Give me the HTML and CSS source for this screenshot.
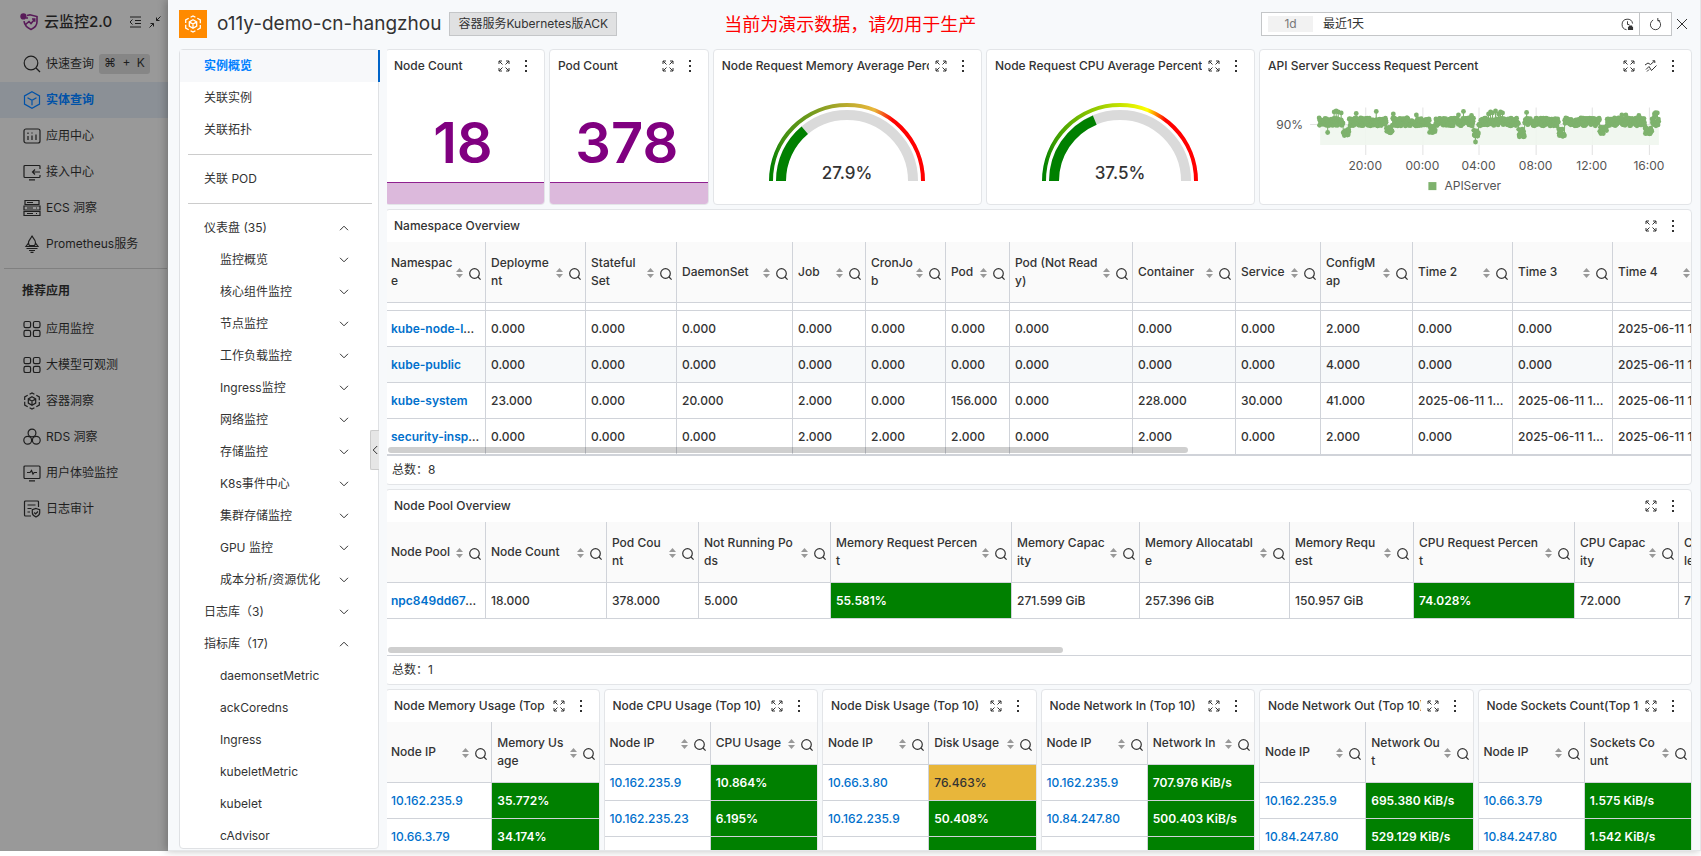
FILE: index.html
```html
<!DOCTYPE html>
<html lang="zh-CN">
<head>
  <meta charset="UTF-8" />
  <meta name="viewport" content="width=device-width, initial-scale=1" />
  <title>云监控2.0</title>
  <link rel="stylesheet" href="styles.css">
</head>
<body>

  <svg class="sprite" aria-hidden="true">
    <symbol id="i-expand" viewBox="0 0 12 12"><path d="M1 4V1h3M1 1l3.5 3.5M8 1h3v3M11 1L7.5 4.5M1 8v3h3M1 11l3.5-3.5M8 11h3V8M11 11L7.5 7.5"/></symbol>
    <symbol id="i-more" viewBox="0 0 12 12"><path class="fill" d="M5 0h2v2H5zM5 5h2v2H5zM5 10h2v2H5z"/></symbol>
    <symbol id="i-search" viewBox="0 0 12 12"><circle cx="5.5" cy="5.5" r="4.8"/><path d="M9 9l2.6 2.6"/></symbol>
    <symbol id="i-sort" viewBox="0 0 7 12"><path class="fill" d="M3.5 1L7 5H0zM3.5 11L0 7h7z"/></symbol>
    <symbol id="i-down" viewBox="0 0 10 6"><path d="M1 .8l4 4 4-4"/></symbol>
    <symbol id="i-up" viewBox="0 0 10 6"><path d="M1 5.2l4-4 4 4"/></symbol>
    <symbol id="i-grid" viewBox="0 0 18 18"><rect x="1" y="1.5" width="6.6" height="6.2" rx="1.6"/><rect x="10.4" y="1.5" width="6.6" height="6.2" rx="1.6"/><rect x="1" y="10.3" width="6.6" height="6.2" rx="1.6"/><rect x="10.4" y="10.3" width="6.6" height="6.2" rx="1.6"/></symbol>
    <symbol id="i-ack" viewBox="0 0 18 18"><path d="M6.6 2.2L9 .9l2.4 1.3M13.3 3.2l3 1.7v3.3M16.3 10v3.1l-3 1.7M11.4 15.8L9 17.1l-2.4-1.3M4.7 14.8l-3-1.7V9.8M1.7 8V4.9l3-1.7"/><path d="M9 4.8l3.7 2.1v4.2L9 13.2l-3.7-2.1V6.9zM5.3 6.9L9 9l3.7-2.1M9 9v4.2"/></symbol>
  </svg>

  <aside class="sidebar">
    <div class="brand">
      <svg class="brand-logo" viewBox="0 0 18 18"><path d="M7 2.6l3-.8 7 1.8v5.2c0 4-3 6.4-6 7.6-3.6-1.4-6.4-4-7-8.2"/><path d="M5.5 11.5L9 8.5l2 2 3.5-4M12 6h2.7v2.7"/><circle class="dot" cx="3.4" cy="3.4" r="3.1"/><circle class="dot" cx="7" cy="5" r="1"/></svg>
      <span class="brand-name">云监控2.0</span>
      <button class="fold" aria-label="收起菜单"><svg viewBox="0 0 12 12"><path d="M1 1h11M6 4.5h6M6 7.5h6M1 11h11M3.5 3.5L1 6l2.500 2.5"/></svg></button>
      <button class="fold" aria-label="收缩"><svg viewBox="0 0 12 12"><path d="M11.5.5l-4 4M7.5 1.5v3h3M.5 11.5l4-4M1.5 7.5h3v3"/></svg></button>
    </div>
    <nav>
      <a class="menu" href="#"><svg viewBox="0 0 18 18"><circle cx="8" cy="8" r="6.8"/><path d="M13 13l4 4"/></svg>快速查询<kbd>⌘ + K</kbd></a>
      <a class="menu active" href="#"><svg viewBox="0 0 18 18"><path d="M9 .8l7.500 4.1v8.200L9 17.2l-7.500-4.1V4.900zM4.500 6.700L9 9.200l4.500-2.500M9 9.200v5"/></svg>实体查询</a>
      <a class="menu" href="#"><svg viewBox="0 0 18 18"><rect x="1" y="2" width="16" height="14" rx="2"/><path d="M5 5.5V7M5 9v4M9 5.5v1M9 8.5V13M13 7.5V13"/></svg>应用中心</a>
      <a class="menu" href="#"><svg viewBox="0 0 18 18"><path d="M17 6V3.5a1 1 0 0 0-1-1H2a1 1 0 0 0-1 1v10a1 1 0 0 0 1 1h14a1 1 0 0 0 1-1V12M17 9H9.5M12 6.5L9.5 9l2.5 2.5M6 16.8h6"/></svg>接入中心</a>
      <a class="menu" href="#"><svg viewBox="0 0 18 18"><path d="M2 1.5h14v4H2zM1 7h16v4H1zM1 12.5h16v4H1zM4 3.5h6M4 9h6M4 14.5h6M13 9h1M13 14.5h1"/></svg>ECS 洞察</a>
      <a class="menu" href="#"><svg viewBox="0 0 18 18"><path d="M9 .5c.3 2.5 3.5 3.5 3.5 7 0 1.5-.5 2.5-1 3.2h-5C6 10 5.5 9 5.5 7.5 5.5 5 8.5 3.5 9 .5zM5.5 8l-2.5 3.500h12L12.5 8M3.5 13.5h11M6 15.5h6M7.5 17.3h3"/></svg>Prometheus服务</a>
    </nav>
    <hr>
    <h2>推荐应用</h2>
    <nav>
      <a class="menu" href="#"><svg><use href="#i-grid"/></svg>应用监控</a>
      <a class="menu" href="#"><svg><use href="#i-grid"/></svg>大模型可观测</a>
      <a class="menu" href="#"><svg><use href="#i-ack"/></svg>容器洞察</a>
      <a class="menu" href="#"><svg viewBox="0 0 18 18"><circle cx="9" cy="5" r="3.9"/><circle cx="4.7" cy="12.3" r="3.9"/><circle cx="13.3" cy="12.3" r="3.9"/></svg>RDS 洞察</a>
      <a class="menu" href="#"><svg viewBox="0 0 18 18"><rect x="1" y="2" width="16" height="12.5" rx="1"/><path d="M4 8.5h3l1.5-2 1.5 3.600 1.2-1.6H14M6 16.8h6"/></svg>用户体验监控</a>
      <a class="menu" href="#"><svg viewBox="0 0 18 18"><path d="M15.5 7V2a1 1 0 0 0-1-1h-12a1 1 0 0 0-1 1v13a1 1 0 0 0 1 1H8M4.5 5h8M4.5 8.5h4M4.5 12H7M13 8.5l3.7 1.3v3c0 2-1.7 3.3-3.7 4.2-2-.9-3.7-2.2-3.7-4.2v-3zM11.2 12.5l1.4 1.4 2.4-2.4"/></svg>日志审计</a>
    </nav>
  </aside>

  <main class="drawer">
    <header class="topbar">
      <span class="product"><svg><use href="#i-ack"/></svg></span>
      <h1>o11y-demo-cn-hangzhou</h1>
      <span class="tag">容器服务Kubernetes版ACK</span>
      <p class="notice">当前为演示数据，请勿用于生产</p>
      <div class="picker">
        <span class="range">1d</span>
        <input type="text" value="最近1天" aria-label="时间范围" readonly>
        <button aria-label="历史时间"><svg viewBox="0 0 14 14"><path d="M12.5 6A5.7 5.7 0 1 0 6 12.6M7 3.5V7h2"/><path class="fill" d="M7.5 9.5H13V13H7.500zM8.5 8H12v2H8.500z"/></svg></button>
        <button class="refresh" aria-label="刷新"><svg viewBox="0 0 14 14"><path d="M4.500 2.200A5.500 5.500 0 1 0 9.500 2.200M9.500 0v3H12"/></svg></button>
      </div>
      <button class="close" aria-label="关闭"><svg viewBox="0 0 12 12"><path d="M1 1l10 10M11 1L1 11"/></svg></button>
    </header>

    <div class="content">
      <aside class="side">
        <nav>
          <a class="item active" href="#">实例概览</a>
          <a class="item" href="#">关联实例</a>
          <a class="item" href="#">关联拓扑</a>
          <hr>
          <a class="item" href="#">关联 POD</a>
          <hr>
          <a class="item" href="#">仪表盘 (35)<svg><use href="#i-up"/></svg></a>
          <a class="item sub" href="#">监控概览<svg><use href="#i-down"/></svg></a>
          <a class="item sub" href="#">核心组件监控<svg><use href="#i-down"/></svg></a>
          <a class="item sub" href="#">节点监控<svg><use href="#i-down"/></svg></a>
          <a class="item sub" href="#">工作负载监控<svg><use href="#i-down"/></svg></a>
          <a class="item sub" href="#">Ingress监控<svg><use href="#i-down"/></svg></a>
          <a class="item sub" href="#">网络监控<svg><use href="#i-down"/></svg></a>
          <a class="item sub" href="#">存储监控<svg><use href="#i-down"/></svg></a>
          <a class="item sub" href="#">K8s事件中心<svg><use href="#i-down"/></svg></a>
          <a class="item sub" href="#">集群存储监控<svg><use href="#i-down"/></svg></a>
          <a class="item sub" href="#">GPU 监控<svg><use href="#i-down"/></svg></a>
          <a class="item sub" href="#">成本分析/资源优化<svg><use href="#i-down"/></svg></a>
          <a class="item" href="#">日志库（3)<svg><use href="#i-down"/></svg></a>
          <a class="item" href="#">指标库（17)<svg><use href="#i-up"/></svg></a>
          <a class="item sub" href="#">daemonsetMetric</a>
          <a class="item sub" href="#">ackCoredns</a>
          <a class="item sub" href="#">Ingress</a>
          <a class="item sub" href="#">kubeletMetric</a>
          <a class="item sub" href="#">kubelet</a>
          <a class="item sub" href="#">cAdvisor</a>
        </nav>
        <button class="handle" aria-label="收起"><svg viewBox="0 0 6 10"><path d="M5.2 1l-4 4 4 4"/></svg></button>
      </aside>

      <div class="board">
        <div class="grid">

          <section class="card w3 h4">
            <div class="card-head"><h3>Node Count</h3><button aria-label="全屏"><svg><use href="#i-expand"/></svg></button><button aria-label="更多"><svg><use href="#i-more"/></svg></button></div>
            <div class="stat">18</div>
            <div class="spark"></div>
          </section>

          <section class="card w3 h4">
            <div class="card-head"><h3>Pod Count</h3><button aria-label="全屏"><svg><use href="#i-expand"/></svg></button><button aria-label="更多"><svg><use href="#i-more"/></svg></button></div>
            <div class="stat">378</div>
            <div class="spark"></div>
          </section>

          <section class="card w5 h4">
            <div class="card-head"><h3>Node Request Memory Average Percent</h3><button aria-label="全屏"><svg><use href="#i-expand"/></svg></button><button aria-label="更多"><svg><use href="#i-more"/></svg></button></div>
            <svg class="gauge" viewBox="0 0 160 80">
              <defs>
                <linearGradient id="memScale">
                  <stop offset="0" stop-color="#008000"/><stop offset=".07" stop-color="#3f8f10"/><stop offset=".25" stop-color="#6f9a1c"/><stop offset=".5" stop-color="#baab2e"/><stop offset=".68" stop-color="#e8b63a"/><stop offset=".8" stop-color="#ff0000"/>
                </linearGradient>
              </defs>
              <path class="scale" stroke="url(#memScale)" d="M4 79a76 76 0 0 1 152 0"/>
              <path class="track" d="M14 79a66 66 0 0 1 132 0"/>
              <path class="value" pathLength="100" stroke-dasharray="27.9 100" d="M14 79a66 66 0 0 1 132 0"/>
              <text x="80" y="77">27.9%</text>
            </svg>
          </section>

          <section class="card w5 h4">
            <div class="card-head"><h3>Node Request CPU Average Percent</h3><button aria-label="全屏"><svg><use href="#i-expand"/></svg></button><button aria-label="更多"><svg><use href="#i-more"/></svg></button></div>
            <svg class="gauge" viewBox="0 0 160 80">
              <defs>
                <linearGradient id="cpuScale">
                  <stop offset="0" stop-color="#008000"/><stop offset=".07" stop-color="#3a9d00"/><stop offset=".25" stop-color="#7abc00"/><stop offset=".5" stop-color="#c4e200"/><stop offset=".68" stop-color="#ffff00"/><stop offset=".8" stop-color="#ff0000"/>
                </linearGradient>
              </defs>
              <path class="scale" stroke="url(#cpuScale)" d="M4 79a76 76 0 0 1 152 0"/>
              <path class="track" d="M14 79a66 66 0 0 1 132 0"/>
              <path class="value" pathLength="100" stroke-dasharray="37.5 100" d="M14 79a66 66 0 0 1 132 0"/>
              <text x="80" y="77">37.5%</text>
            </svg>
          </section>

          <section class="card w8 h4">
            <div class="card-head"><h3>API Server Success Request Percent</h3><button aria-label="全屏"><svg><use href="#i-expand"/></svg></button><button aria-label="对比"><svg viewBox="0 0 12 12"><path d="M0 5l3-2 2.5 1.5L9.5 1M7.5.8h2.3V3M1 9.5l3-3 2.5 4 5-5M2 11.5l2-2"/></svg></button><button aria-label="更多"><svg><use href="#i-more"/></svg></button></div>
            <svg class="chart" viewBox="0 0 430 120">
              <g id="apiGrid" class="lines"></g>
              <rect class="area" x="60" y="42" width="338" height="20"/>
              <g id="apiSeries"></g>
              <text class="y" x="43" y="46">90%</text>
              <g id="apiLabels"></g>
              <rect class="key" x="168" y="99" width="8" height="8"/>
              <text class="name" x="184" y="107">APIServer</text>
            </svg>
          </section>

          <section class="card w24 h7">
            <div class="card-head"><h3>Namespace Overview</h3><button aria-label="全屏"><svg><use href="#i-expand"/></svg></button><button aria-label="更多"><svg><use href="#i-more"/></svg></button></div>
            <div class="table-wrap">
              <table class="wide namespaces">
                <colgroup><col class="c100"><col class="c100"><col class="c91"><col class="c116"><col class="c73"><col class="c80"><col class="c64"><col class="c123"><col class="c103"><col class="c85"><col class="c92"><col class="c100"><col class="c100"><col class="c100"></colgroup>
                <thead>
                  <tr>
                    <th><div class="th"><span>Namespace</span><button class="sort" aria-label="排序"><svg><use href="#i-sort"/></svg></button><button aria-label="搜索"><svg><use href="#i-search"/></svg></button></div></th>
                    <th><div class="th"><span>Deployment</span><button class="sort" aria-label="排序"><svg><use href="#i-sort"/></svg></button><button aria-label="搜索"><svg><use href="#i-search"/></svg></button></div></th>
                    <th><div class="th"><span>Stateful<br>Set</span><button class="sort" aria-label="排序"><svg><use href="#i-sort"/></svg></button><button aria-label="搜索"><svg><use href="#i-search"/></svg></button></div></th>
                    <th><div class="th"><span>DaemonSet</span><button class="sort" aria-label="排序"><svg><use href="#i-sort"/></svg></button><button aria-label="搜索"><svg><use href="#i-search"/></svg></button></div></th>
                    <th><div class="th"><span>Job</span><button class="sort" aria-label="排序"><svg><use href="#i-sort"/></svg></button><button aria-label="搜索"><svg><use href="#i-search"/></svg></button></div></th>
                    <th><div class="th"><span>CronJob</span><button class="sort" aria-label="排序"><svg><use href="#i-sort"/></svg></button><button aria-label="搜索"><svg><use href="#i-search"/></svg></button></div></th>
                    <th><div class="th"><span>Pod</span><button class="sort" aria-label="排序"><svg><use href="#i-sort"/></svg></button><button aria-label="搜索"><svg><use href="#i-search"/></svg></button></div></th>
                    <th><div class="th"><span>Pod (Not Ready)</span><button class="sort" aria-label="排序"><svg><use href="#i-sort"/></svg></button><button aria-label="搜索"><svg><use href="#i-search"/></svg></button></div></th>
                    <th><div class="th"><span>Container</span><button class="sort" aria-label="排序"><svg><use href="#i-sort"/></svg></button><button aria-label="搜索"><svg><use href="#i-search"/></svg></button></div></th>
                    <th><div class="th"><span>Service</span><button class="sort" aria-label="排序"><svg><use href="#i-sort"/></svg></button><button aria-label="搜索"><svg><use href="#i-search"/></svg></button></div></th>
                    <th><div class="th"><span>ConfigMap</span><button class="sort" aria-label="排序"><svg><use href="#i-sort"/></svg></button><button aria-label="搜索"><svg><use href="#i-search"/></svg></button></div></th>
                    <th><div class="th"><span>Time 2</span><button class="sort" aria-label="排序"><svg><use href="#i-sort"/></svg></button><button aria-label="搜索"><svg><use href="#i-search"/></svg></button></div></th>
                    <th><div class="th"><span>Time 3</span><button class="sort" aria-label="排序"><svg><use href="#i-sort"/></svg></button><button aria-label="搜索"><svg><use href="#i-search"/></svg></button></div></th>
                    <th><div class="th"><span>Time 4</span><button class="sort" aria-label="排序"><svg><use href="#i-sort"/></svg></button><button aria-label="搜索"><svg><use href="#i-search"/></svg></button></div></th>
                  </tr>
                </thead>
                <tbody>
                  <tr class="peek"><td></td><td></td><td></td><td></td><td></td><td></td><td></td><td></td><td></td><td></td><td></td><td></td><td></td><td></td></tr>
                  <tr><td><a href="#">kube-node-lease</a></td><td>0.000</td><td>0.000</td><td>0.000</td><td>0.000</td><td>0.000</td><td>0.000</td><td>0.000</td><td>0.000</td><td>0.000</td><td>2.000</td><td>0.000</td><td>0.000</td><td class="cut">2025-06-11 17:00</td></tr>
                  <tr class="even"><td><a href="#">kube-public</a></td><td>0.000</td><td>0.000</td><td>0.000</td><td>0.000</td><td>0.000</td><td>0.000</td><td>0.000</td><td>0.000</td><td>0.000</td><td>4.000</td><td>0.000</td><td>0.000</td><td class="cut">2025-06-11 17:00</td></tr>
                  <tr><td><a href="#">kube-system</a></td><td>23.000</td><td>0.000</td><td>20.000</td><td>2.000</td><td>0.000</td><td>156.000</td><td>0.000</td><td>228.000</td><td>30.000</td><td>41.000</td><td>2025-06-11 17:00</td><td>2025-06-11 17:00</td><td class="cut">2025-06-11 17:00</td></tr>
                  <tr><td><a href="#">security-inspector</a></td><td>0.000</td><td>0.000</td><td>0.000</td><td>2.000</td><td>2.000</td><td>2.000</td><td>0.000</td><td>2.000</td><td>0.000</td><td>2.000</td><td>0.000</td><td>2025-06-11 17:00</td><td class="cut">2025-06-11 17:00</td></tr>
                </tbody>
              </table>
              <div class="scroll" style="width: 61.3%"></div>
            </div>
            <div class="total">总数：8</div>
          </section>

          <section class="card w24 h5">
            <div class="card-head"><h3>Node Pool Overview</h3><button aria-label="全屏"><svg><use href="#i-expand"/></svg></button><button aria-label="更多"><svg><use href="#i-more"/></svg></button></div>
            <div class="table-wrap">
              <table class="wide pools">
                <colgroup><col class="c100"><col class="c121"><col class="c92"><col class="c132"><col class="c181"><col class="c128"><col class="c150"><col class="c124"><col class="c161"><col class="c104"><col class="c123"></colgroup>
                <thead>
                  <tr>
                    <th><div class="th"><span>Node Pool</span><button class="sort" aria-label="排序"><svg><use href="#i-sort"/></svg></button><button aria-label="搜索"><svg><use href="#i-search"/></svg></button></div></th>
                    <th><div class="th"><span>Node Count</span><button class="sort" aria-label="排序"><svg><use href="#i-sort"/></svg></button><button aria-label="搜索"><svg><use href="#i-search"/></svg></button></div></th>
                    <th><div class="th"><span>Pod Count</span><button class="sort" aria-label="排序"><svg><use href="#i-sort"/></svg></button><button aria-label="搜索"><svg><use href="#i-search"/></svg></button></div></th>
                    <th><div class="th"><span>Not Running Pods</span><button class="sort" aria-label="排序"><svg><use href="#i-sort"/></svg></button><button aria-label="搜索"><svg><use href="#i-search"/></svg></button></div></th>
                    <th><div class="th"><span>Memory Request Percent</span><button class="sort" aria-label="排序"><svg><use href="#i-sort"/></svg></button><button aria-label="搜索"><svg><use href="#i-search"/></svg></button></div></th>
                    <th><div class="th"><span>Memory Capacity</span><button class="sort" aria-label="排序"><svg><use href="#i-sort"/></svg></button><button aria-label="搜索"><svg><use href="#i-search"/></svg></button></div></th>
                    <th><div class="th"><span>Memory Allocatable</span><button class="sort" aria-label="排序"><svg><use href="#i-sort"/></svg></button><button aria-label="搜索"><svg><use href="#i-search"/></svg></button></div></th>
                    <th><div class="th"><span>Memory Request</span><button class="sort" aria-label="排序"><svg><use href="#i-sort"/></svg></button><button aria-label="搜索"><svg><use href="#i-search"/></svg></button></div></th>
                    <th><div class="th"><span>CPU Request Percent</span><button class="sort" aria-label="排序"><svg><use href="#i-sort"/></svg></button><button aria-label="搜索"><svg><use href="#i-search"/></svg></button></div></th>
                    <th><div class="th"><span>CPU Capacity</span><button class="sort" aria-label="排序"><svg><use href="#i-sort"/></svg></button><button aria-label="搜索"><svg><use href="#i-search"/></svg></button></div></th>
                    <th><div class="th"><span>CPU Allocatab<br>le</span><button class="sort" aria-label="排序"><svg><use href="#i-sort"/></svg></button><button aria-label="搜索"><svg><use href="#i-search"/></svg></button></div></th>
                  </tr>
                </thead>
                <tbody>
                  <tr><td><a href="#">npc849dd67c2f14</a></td><td>18.000</td><td>378.000</td><td>5.000</td><td class="good">55.581%</td><td>271.599 GiB</td><td>257.396 GiB</td><td>150.957 GiB</td><td class="good">74.028%</td><td>72.000</td><td>70.000</td></tr>
                </tbody>
              </table>
              <div class="scroll" style="width: 51.7%"></div>
            </div>
            <div class="total">总数：1</div>
          </section>

          <section class="card w4 h7">
            <div class="card-head"><h3>Node Memory Usage (Top 10)</h3><button aria-label="全屏"><svg><use href="#i-expand"/></svg></button><button aria-label="更多"><svg><use href="#i-more"/></svg></button></div>
            <div class="table-wrap">
              <table>
                <thead>
                  <tr>
                    <th><div class="th"><span>Node IP</span><button class="sort" aria-label="排序"><svg><use href="#i-sort"/></svg></button><button aria-label="搜索"><svg><use href="#i-search"/></svg></button></div></th>
                    <th><div class="th"><span>Memory Usage</span><button class="sort" aria-label="排序"><svg><use href="#i-sort"/></svg></button><button aria-label="搜索"><svg><use href="#i-search"/></svg></button></div></th>
                  </tr>
                </thead>
                <tbody>
                  <tr><td><a href="#">10.162.235.9</a></td><td class="good">35.772%</td></tr>
                  <tr><td><a href="#">10.66.3.79</a></td><td class="good">34.174%</td></tr>
                </tbody>
              </table>
            </div>
          </section>

          <section class="card w4 h7">
            <div class="card-head"><h3>Node CPU Usage (Top 10)</h3><button aria-label="全屏"><svg><use href="#i-expand"/></svg></button><button aria-label="更多"><svg><use href="#i-more"/></svg></button></div>
            <div class="table-wrap">
              <table>
                <thead>
                  <tr>
                    <th><div class="th"><span>Node IP</span><button class="sort" aria-label="排序"><svg><use href="#i-sort"/></svg></button><button aria-label="搜索"><svg><use href="#i-search"/></svg></button></div></th>
                    <th><div class="th"><span>CPU Usage</span><button class="sort" aria-label="排序"><svg><use href="#i-sort"/></svg></button><button aria-label="搜索"><svg><use href="#i-search"/></svg></button></div></th>
                  </tr>
                </thead>
                <tbody>
                  <tr><td><a href="#">10.162.235.9</a></td><td class="good">10.864%</td></tr>
                  <tr><td><a href="#">10.162.235.23</a></td><td class="good">6.195%</td></tr>
                  <tr><td></td><td class="good"></td></tr>
                </tbody>
              </table>
            </div>
          </section>

          <section class="card w4 h7">
            <div class="card-head"><h3>Node Disk Usage (Top 10)</h3><button aria-label="全屏"><svg><use href="#i-expand"/></svg></button><button aria-label="更多"><svg><use href="#i-more"/></svg></button></div>
            <div class="table-wrap">
              <table>
                <thead>
                  <tr>
                    <th><div class="th"><span>Node IP</span><button class="sort" aria-label="排序"><svg><use href="#i-sort"/></svg></button><button aria-label="搜索"><svg><use href="#i-search"/></svg></button></div></th>
                    <th><div class="th"><span>Disk Usage</span><button class="sort" aria-label="排序"><svg><use href="#i-sort"/></svg></button><button aria-label="搜索"><svg><use href="#i-search"/></svg></button></div></th>
                  </tr>
                </thead>
                <tbody>
                  <tr><td><a href="#">10.66.3.80</a></td><td class="warn">76.463%</td></tr>
                  <tr><td><a href="#">10.162.235.9</a></td><td class="good">50.408%</td></tr>
                  <tr><td></td><td class="good"></td></tr>
                </tbody>
              </table>
            </div>
          </section>

          <section class="card w4 h7">
            <div class="card-head"><h3>Node Network In (Top 10)</h3><button aria-label="全屏"><svg><use href="#i-expand"/></svg></button><button aria-label="更多"><svg><use href="#i-more"/></svg></button></div>
            <div class="table-wrap">
              <table>
                <thead>
                  <tr>
                    <th><div class="th"><span>Node IP</span><button class="sort" aria-label="排序"><svg><use href="#i-sort"/></svg></button><button aria-label="搜索"><svg><use href="#i-search"/></svg></button></div></th>
                    <th><div class="th"><span>Network In</span><button class="sort" aria-label="排序"><svg><use href="#i-sort"/></svg></button><button aria-label="搜索"><svg><use href="#i-search"/></svg></button></div></th>
                  </tr>
                </thead>
                <tbody>
                  <tr><td><a href="#">10.162.235.9</a></td><td class="good">707.976 KiB/s</td></tr>
                  <tr><td><a href="#">10.84.247.80</a></td><td class="good">500.403 KiB/s</td></tr>
                  <tr><td></td><td class="good"></td></tr>
                </tbody>
              </table>
            </div>
          </section>

          <section class="card w4 h7">
            <div class="card-head"><h3>Node Network Out (Top 10)</h3><button aria-label="全屏"><svg><use href="#i-expand"/></svg></button><button aria-label="更多"><svg><use href="#i-more"/></svg></button></div>
            <div class="table-wrap">
              <table>
                <thead>
                  <tr>
                    <th><div class="th"><span>Node IP</span><button class="sort" aria-label="排序"><svg><use href="#i-sort"/></svg></button><button aria-label="搜索"><svg><use href="#i-search"/></svg></button></div></th>
                    <th><div class="th"><span>Network Out</span><button class="sort" aria-label="排序"><svg><use href="#i-sort"/></svg></button><button aria-label="搜索"><svg><use href="#i-search"/></svg></button></div></th>
                  </tr>
                </thead>
                <tbody>
                  <tr><td><a href="#">10.162.235.9</a></td><td class="good">695.380 KiB/s</td></tr>
                  <tr><td><a href="#">10.84.247.80</a></td><td class="good">529.129 KiB/s</td></tr>
                </tbody>
              </table>
            </div>
          </section>

          <section class="card w4 h7">
            <div class="card-head"><h3>Node Sockets Count(Top 10)</h3><button aria-label="全屏"><svg><use href="#i-expand"/></svg></button><button aria-label="更多"><svg><use href="#i-more"/></svg></button></div>
            <div class="table-wrap">
              <table>
                <thead>
                  <tr>
                    <th><div class="th"><span>Node IP</span><button class="sort" aria-label="排序"><svg><use href="#i-sort"/></svg></button><button aria-label="搜索"><svg><use href="#i-search"/></svg></button></div></th>
                    <th><div class="th"><span>Sockets Count</span><button class="sort" aria-label="排序"><svg><use href="#i-sort"/></svg></button><button aria-label="搜索"><svg><use href="#i-search"/></svg></button></div></th>
                  </tr>
                </thead>
                <tbody>
                  <tr><td><a href="#">10.66.3.79</a></td><td class="good">1.575 KiB/s</td></tr>
                  <tr><td><a href="#">10.84.247.80</a></td><td class="good">1.542 KiB/s</td></tr>
                </tbody>
              </table>
            </div>
          </section>

        </div>
      </div>
    </div>
  </main>

  <script src="chart.js"></script>
</body>
</html>
```
FILE: styles.css
```css
* {
  box-sizing: border-box;
}

body {
  margin: 0;
  height: 100vh;
  padding-bottom: 5px;
  display: flex;
  overflow: hidden;
  background: #fff;
  color: #333;
  font-family: Inter, "Noto Sans CJK SC", sans-serif;
  font-size: 12px;
  line-height: 18px;
}

a {
  color: inherit;
  text-decoration: none;
}

button {
  flex: none;
  display: flex;
  align-items: center;
  justify-content: center;
  padding: 0;
  border: none;
  background: none;
  color: inherit;
  cursor: pointer;
}

svg {
  fill: none;
  stroke: currentColor;
}

.fill {
  fill: currentColor;
  stroke: none;
}

.sprite {
  position: absolute;
  width: 0;
  height: 0;
}

hr {
  margin: 0;
  border: none;
  border-top: 1px solid #ccc;
}

/* left menu, dimmed behind the drawer */
.sidebar {
  flex: none;
  width: 168px;
  background: #999;
  color: #1e1e1e;
}

.brand {
  display: flex;
  align-items: center;
  height: 46px;
  padding: 0 6px 2px 20px;
  gap: 6px;
}

.brand-logo {
  width: 18px;
  height: 18px;
  color: #581a58;
  stroke-width: 1.6;
}

.brand-logo .dot {
  fill: #581a58;
  stroke: none;
}

.brand-name {
  flex: 1;
  font-size: 15px;
  font-weight: 500;
  white-space: nowrap;
}

.fold {
  width: 14px;
}

.fold svg {
  width: 12px;
  height: 12px;
}

.menu {
  display: flex;
  align-items: center;
  height: 36px;
  padding-left: 23px;
  gap: 5px;
  white-space: nowrap;
}

.menu svg {
  flex: none;
  width: 18px;
  height: 18px;
  stroke-width: 1.2;
}

.menu.active {
  background: #8b9096;
  color: #0052a8;
  font-weight: 700;
}

kbd {
  height: 20px;
  padding: 0 5px;
  border-radius: 3px;
  background: #868686;
  font: inherit;
  line-height: 18px;
  word-spacing: 3px;
}

.sidebar hr {
  margin: 6px 1px 0 4px;
  border-color: #808080;
}

.sidebar h2 {
  margin: 13px 0 11px 22px;
  font-size: 12px;
  font-weight: 700;
}

/* drawer */
.drawer {
  position: relative;
  flex: 1;
  min-width: 0;
  display: flex;
  flex-direction: column;
  border: 1px solid #e4e6e8;
  border-width: 0 1px 1px 0;
  background: #f7f9fb;
  box-shadow: -2px 0 8px rgba(0, 0, 0, 0.25);
}

.topbar {
  display: flex;
  align-items: center;
  height: 49px;
  padding: 0 12px 1px 11px;
}

.product {
  display: flex;
  align-items: center;
  justify-content: center;
  width: 28px;
  height: 28px;
  margin-right: 10px;
  background: #ff8a00;
  color: #fff;
}

.product svg {
  width: 18px;
  height: 18px;
  stroke-width: 1.3;
}

h1 {
  margin: 0 8px 0 0;
  font-size: 19px;
  font-weight: 400;
  line-height: 24px;
}

.tag {
  padding: 2px 8px;
  border: 1px solid #c4c6c8;
  background: #e0e1e2;
  line-height: 18px;
}

.notice {
  margin: 2px 0 0 107px;
  color: #f00;
  font-size: 18px;
  line-height: 24px;
}

.picker {
  display: flex;
  align-items: center;
  width: 411px;
  height: 24px;
  margin-left: auto;
  border: 1px solid #c4c6c8;
  background: #fff;
}

.range {
  width: 45px;
  height: 16px;
  margin-left: 6px;
  background: #f2f2f2;
  color: #777;
  line-height: 16px;
  text-align: center;
}

.picker input {
  flex: 1;
  min-width: 0;
  padding: 0 10px;
  border: none;
  outline: none;
  background: none;
  color: #333;
  font: inherit;
}

.picker button {
  width: 24px;
  height: 22px;
}

.picker .refresh {
  width: 32px;
  border-left: 1px solid #c4c6c8;
}

.picker svg {
  width: 13px;
  height: 13px;
}

.close {
  margin-left: 4px;
}

.close svg {
  width: 12px;
  height: 12px;
}

.content {
  flex: 1;
  min-height: 0;
  display: flex;
  gap: 8px;
  padding: 0 8px 0 11px;
}

/* instance navigation */
.side {
  position: relative;
  flex: none;
  width: 200px;
  margin-bottom: 1px;
  border: 1px solid #dfe1e4;
  border-radius: 4px;
  background: #fff;
}

.side hr {
  margin: 8px 6px 8px 8px;
}

.item {
  position: relative;
  display: flex;
  align-items: center;
  justify-content: space-between;
  height: 32px;
  padding: 0 29px 0 24px;
}

.item.sub {
  padding-left: 40px;
}

.item.active {
  background: #f7f8fa;
  color: #0080ff;
  font-weight: 700;
}

.item.active::after {
  content: "";
  position: absolute;
  top: 0;
  right: -2px;
  width: 2px;
  height: 32px;
  background: #0064c8;
}

.item svg {
  width: 10px;
  height: 6px;
}

.handle {
  position: absolute;
  top: 380px;
  right: -1px;
  width: 9px;
  height: 40px;
  border: 1px solid #ccc;
  border-right: none;
  border-radius: 2px 0 0 2px;
  background: #e6e6e6;
}

.handle svg {
  width: 6px;
  height: 10px;
}

/* dashboard */
.board {
  flex: 1;
  min-width: 0;
  overflow: hidden;
}

.grid {
  display: grid;
  grid-template-columns: repeat(24, minmax(0, 1fr));
  grid-auto-rows: 36px;
  gap: 4px;
  margin-left: -2px;
}

.w3 { grid-column: span 3; }
.w4 { grid-column: span 4; }
.w5 { grid-column: span 5; }
.w8 { grid-column: span 8; }
.w24 { grid-column: span 24; }
.h4 { grid-row: span 4; }
.h5 { grid-row: span 5; }
.h7 { grid-row: span 7; }

.card {
  display: flex;
  flex-direction: column;
  min-width: 0;
  overflow: hidden;
  border: 1px solid #e3e5e8;
  border-radius: 4px;
  background: #fff;
}

.card-head {
  flex: none;
  display: flex;
  align-items: center;
  gap: 10px;
  height: 32px;
  padding: 0 12px 0 8px;
}

.card-head h3 {
  flex: 1;
  min-width: 0;
  margin: 0 -4px 0 0;
  overflow: hidden;
  font-size: 12px;
  font-weight: 500;
  white-space: nowrap;
}

.card-head button,
.card-head svg {
  width: 12px;
  height: 12px;
}

.stat {
  flex: 1;
  display: flex;
  align-items: center;
  justify-content: center;
  padding: 22px 4px 0 0;
  color: purple;
  font-size: 56px;
  font-weight: 600;
  line-height: 64px;
}

.spark {
  height: 22px;
  border-top: 1px solid #8f208f;
  background: #dcb9dc;
}

.gauge {
  align-self: center;
  width: 160px;
  height: 80px;
  margin-top: 20px;
}

.gauge .scale {
  stroke-width: 4;
}

.gauge .track {
  stroke: #dadada;
  stroke-width: 10;
}

.gauge .value {
  stroke: #008000;
  stroke-width: 10;
}

.gauge text {
  fill: #333;
  stroke: none;
  font-size: 17px;
  font-weight: 500;
  text-anchor: middle;
}

.chart {
  flex: 1;
  min-height: 0;
  width: 100%;
}

.chart text {
  fill: #555;
  stroke: none;
  text-anchor: middle;
}

.chart .y {
  text-anchor: end;
}

.chart .name {
  text-anchor: start;
}

.chart .lines {
  stroke: #e2e2e2;
}

.chart .area {
  fill: #eff6ee;
  fill-opacity: 0.9;
  stroke: none;
}

.chart .key {
  fill: #7eb26d;
  stroke: none;
}

#apiSeries {
  fill: #7eb26d;
  stroke: none;
}

#apiSeries path {
  fill: none;
  stroke: #7eb26d;
}

/* tables */
.table-wrap {
  position: relative;
  flex: 1;
  min-height: 0;
  overflow: hidden;
}

table {
  width: 100%;
  border-spacing: 0;
  table-layout: fixed;
}

.namespaces {
  width: 1327px;
}

.pools {
  width: 1416px;
}

.c64 { width: 64px; }
.c73 { width: 73px; }
.c80 { width: 80px; }
.c85 { width: 85px; }
.c91 { width: 91px; }
.c92 { width: 92px; }
.c100 { width: 100px; }
.c103 { width: 103px; }
.c104 { width: 104px; }
.c116 { width: 116px; }
.c121 { width: 121px; }
.c123 { width: 123px; }
.c124 { width: 124px; }
.c128 { width: 128px; }
.c132 { width: 132px; }
.c150 { width: 150px; }
.c161 { width: 161px; }
.c181 { width: 181px; }

th,
td {
  border-right: 1px solid #d0d3d9;
  border-bottom: 1px solid #d0d3d9;
  text-align: left;
  font-weight: 500;
}

table:not(.wide) th:last-child,
table:not(.wide) td:last-child {
  border-right: none;
}

th {
  padding: 12px 4px 12px 5px;
  background: #fafafa;
}

.th {
  display: flex;
  align-items: center;
}

.th span {
  flex: 1;
  min-width: 0;
  margin-right: 3px;
  word-break: break-all;
}

.th button {
  padding-top: 3px;
}

.th svg {
  width: 12px;
  height: 12px;
  stroke-width: 1.2;
}

.th .sort {
  padding-top: 2px;
  margin-right: 6px;
  color: #999;
}

.th .sort svg {
  width: 7px;
}

td {
  height: 36px;
  padding: 0 5px;
  overflow: hidden;
  text-overflow: ellipsis;
  white-space: nowrap;
}

td a {
  color: #0070cc;
}

.wide td a {
  font-weight: 600;
}

.cut {
  text-overflow: clip;
}

.peek td {
  height: 8px;
}

.even td {
  background: #f7f9fa;
}

td.good {
  background: #008000;
  color: #fff;
  font-weight: 600;
}

td.warn {
  background: #e8b63a;
}

.scroll {
  position: absolute;
  left: 2px;
  bottom: 2px;
  height: 6px;
  border-radius: 3px;
  background: rgba(0, 0, 0, 0.19);
}

.total {
  flex: none;
  height: 29px;
  padding: 5px 6px 0;
  border-top: 1px solid #d0d3d9;
}
```
FILE: chart.js
```javascript
const NS = 'http://www.w3.org/2000/svg';

function add(parent, tag, attrs, text) {
  const el = document.createElementNS(NS, tag);
  for (const key in attrs) el.setAttribute(key, attrs[key]);
  if (text) el.textContent = text;
  parent.appendChild(el);
}

// time axis
const ticks = [[105, '20:00'], [162, '00:00'], [218, '04:00'], [275, '08:00'], [331, '12:00'], [388, '16:00']];
const grid = document.getElementById('apiGrid');
const labels = document.getElementById('apiLabels');
add(grid, 'path', { d: 'M50 41.5H398' });
ticks.forEach(([x, label]) => {
  add(grid, 'path', { d: `M${x + 0.5} 24.5V72` });
  add(labels, 'text', { x: x, y: 87 }, label);
});

// periods of [from, to, top, bottom]
const dips = [[83, 89, 46, 53], [126, 132, 44, 50], [169, 175, 43, 50], [213, 218, 46, 54], [258, 264, 46, 54], [298, 304, 46, 54], [339, 346, 44, 51], [384, 391, 45, 51]];
const peaks = [[393, 397, 29, 44]];
const singles = [[67.5, 49.5], [74, 29], [76, 28], [78, 29], [81, 30], [96, 30.5], [116, 28.5], [133, 31], [156, 32], [198, 32], [203, 28.5], [211, 32.5], [215, 59],
  [228, 31], [230, 29], [232, 30], [235, 28], [238, 31], [240, 29], [242, 30], [266, 29.5], [361, 32], [365, 32], [378, 32.5]];

// small fixed generator so the series is the same on every load
let seed = 7;
function rnd() {
  seed = (seed * 16807) % 2147483647;
  return seed / 2147483647;
}

const points = [];
for (let x = 59; x <= 398; x += 0.35) {
  const span = dips.find(d => x >= d[0] && x <= d[1]) || peaks.find(p => x >= p[0] && x <= p[1]) || [0, 0, 35, 43];
  points.push([x, span[2] + rnd() * (span[3] - span[2])]);
}
singles.forEach(p => points.push(p));
points.sort((a, b) => a[0] - b[0]);

const series = document.getElementById('apiSeries');
add(series, 'path', { d: 'M' + points.map(p => p[0].toFixed(1) + ' ' + p[1].toFixed(1)).join('L') });
points.forEach(p => add(series, 'circle', { cx: p[0].toFixed(1), cy: p[1].toFixed(1), r: 2.4 }));
```
